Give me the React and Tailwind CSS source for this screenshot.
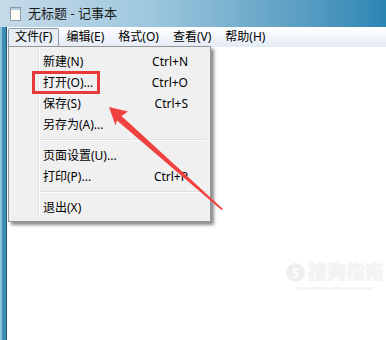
import React from "react";

const menuItems = [
  { label: "新建(N)", key: "Ctrl+N" },
  { label: "打开(O)...", key: "Ctrl+O", boxed: true },
  { label: "保存(S)", key: "Ctrl+S" },
  { label: "另存为(A)..." },
  "sep",
  { label: "页面设置(U)..." },
  { label: "打印(P)...", key: "Ctrl+P" },
  "sep",
  { label: "退出(X)" },
];

const menuBar = ["文件(F)", "编辑(E)", "格式(O)", "查看(V)", "帮助(H)"];

export default function App() {
  return (
    <div
      className="relative w-[386px] h-[340px] overflow-hidden bg-white text-black"
      style={{ fontFamily: '"Noto Sans", "Noto Sans CJK SC", sans-serif' }}
    >
      {/* title bar */}
      <div className="h-[27px] flex items-center gap-[7px] pl-[10px] bg-gradient-to-r from-[#c6dae9] via-[#9cc7dd] via-40% to-[#2b86b3]">
        <svg width="11" height="14" viewBox="0 0 11 14">
          <rect x="0.5" y="0.5" width="10" height="13" fill="#fdfdf6" stroke="#8c9aa6" />
          <rect x="1" y="1" width="9" height="2" fill="#b7cfe0" />
        </svg>
        <span className="text-[13px] leading-none text-[#1a1a1a]">无标题 - 记事本</span>
      </div>

      <div className="flex h-[313px]">
        {/* window left frame */}
        <div className="w-[7px] flex">
          <div className="w-[2px] bg-[#8cc3dc]" />
          <div className="w-[4px] bg-[#3b8db6]" />
          <div className="w-[1px] bg-[#1f4f6e]" />
        </div>
        <div className="flex-1 flex flex-col">
          {/* menu bar */}
          <div className="h-[20px] flex items-center bg-gradient-to-b from-white to-[#e3ebf5] text-[12px]">
            {menuBar.map((m, i) => (
              <div
                key={m}
                className={
                  i === 0
                    ? "h-[19px] ml-[1px] px-[6px] flex items-center border border-[#8d9aa8] bg-[#e8eef5] rounded-[2px]"
                    : "h-[19px] px-[7px] flex items-center"
                }
              >
                {m}
              </div>
            ))}
          </div>
          <div className="flex-1 bg-white" />
        </div>
      </div>

      {/* dropdown */}
      <div className="absolute left-[8px] top-[46px] w-[203px] pt-[4px] pb-[3px] pl-[2px] pr-[2px] bg-[#f0f0f0] border border-[#979797] shadow-[3px_3px_3px_rgba(0,0,0,0.45)] text-[12px]">
        <div className="absolute left-[29px] top-[2px] bottom-[2px] w-[1px] bg-[#e2e3e3]" />
        <div className="absolute left-[30px] top-[2px] bottom-[2px] w-[1px] bg-white" />
        {menuItems.map((it, i) =>
          it === "sep" ? (
            <div key={i} className="h-[10px] flex flex-col justify-center pl-[29px] pr-[1px]">
              <div className="h-[1px] bg-[#e0e0e0]" />
              <div className="h-[1px] bg-white" />
            </div>
          ) : (
            <div key={i} className="h-[21px] flex items-center pl-[32px] pr-[20px]">
              <span className="flex-1">{it.label}</span>
              {it.key && <span>{it.key}</span>}
            </div>
          )
        )}
      </div>

      {/* red highlight box */}
      <div className="absolute left-[32px] top-[71px] w-[68px] h-[23px] border-[3px] border-[#e8393a]" />

      {/* red arrow */}
      <svg className="absolute left-0 top-0" width="386" height="340" viewBox="0 0 386 340">
        <polygon
          points="109,107 128,111.5 121.5,116 223,209 221.5,210 117,120.5 115.5,125.5"
          fill="#ef4140"
        />
      </svg>

      {/* watermark */}
      <div className="absolute left-[286px] top-[263px] flex flex-col items-center gap-[5px] whitespace-nowrap">
        <div className="flex items-center gap-[3px] text-[19px] font-bold leading-none text-[#f4f4f4] [text-shadow:0_0_2px_#e8e8e8]">
          <span className="w-[19px] h-[19px] rounded-full bg-[#efefef] text-white text-[14px] flex items-center justify-center">S</span>
          <span>搜狗指南</span>
        </div>
        <div className="w-[76px] h-[3px] bg-[#f5f5f5]" />
      </div>
    </div>
  );
}
